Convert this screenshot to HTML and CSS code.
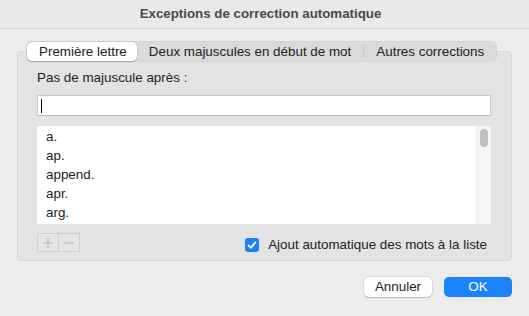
FILE: index.html
```html
<!DOCTYPE html>
<html lang="fr">
<head>
<meta charset="utf-8">
<link rel="stylesheet" href="styles.css">
</head>
<body>
<div class="window">
  <div class="titlebar">Exceptions de correction automatique</div>
  <div class="main">
    <div class="tabs">
      <div class="tab selected">Première lettre</div>
      <div class="tab">Deux majuscules en début de mot</div>
      <div class="sep"></div>
      <div class="tab">Autres corrections</div>
    </div>
    <div class="box">
      <div class="label">Pas de majuscule après :</div>
      <div class="field"><span class="caret"></span></div>
      <div class="list">
        <div class="items">
          <div class="item">a.</div>
          <div class="item">ap.</div>
          <div class="item">append.</div>
          <div class="item">apr.</div>
          <div class="item">arg.</div>
        </div>
        <div class="scrollbar"><div class="thumb"></div></div>
      </div>
      <div class="bottomrow">
        <div class="pm">
          <div class="pmbtn">
            <svg width="12" height="12" viewBox="0 0 12 12"><path d="M6 1v10M1 6h10" stroke="#b9b9b9" stroke-width="1.2" fill="none"/></svg>
          </div>
          <div class="pmbtn">
            <svg width="12" height="12" viewBox="0 0 12 12"><path d="M1 6h10" stroke="#b9b9b9" stroke-width="1.2" fill="none"/></svg>
          </div>
        </div>
        <label class="check">
          <span class="box-check">
            <svg width="14" height="14" viewBox="0 0 14 14"><path d="M3.5 7.3l2.4 2.6 4.6-5.8" stroke="#fff" stroke-width="1.8" fill="none" stroke-linecap="round" stroke-linejoin="round"/></svg>
          </span>
          <span>Ajout automatique des mots à la liste</span>
        </label>
      </div>
    </div>
    <div class="buttons">
      <div class="btn cancel">Annuler</div>
      <div class="btn ok">OK</div>
    </div>
  </div>
</div>
</body>
</html>
```
FILE: styles.css
```css
html, body {
  margin: 0;
  padding: 0;
}
body {
  width: 529px;
  height: 316px;
  background: #ececec;
  font-family: "Liberation Sans", Arial, sans-serif;
  font-size: 13.4px;
  color: #222;
  overflow: hidden;
}
.window {
  display: flex;
  flex-direction: column;
  height: 316px;
}
.titlebar {
  height: 28px;
  line-height: 28px;
  text-align: center;
  font-weight: bold;
  font-size: 13.3px;
  color: #4a4a4a;
  background: #e9e9e9;
  border-bottom: 1px solid #d2d2d2;
  padding-right: 8px;
}
.main {
  padding: 12px 17px 0 17px;
  display: flex;
  flex-direction: column;
}
.tabs {
  position: relative;
  z-index: 1;
  align-self: flex-start;
  margin-left: 9px;
  display: flex;
  align-items: center;
  height: 21px;
  padding: 0 1px;
  background: #dadada;
  border-radius: 6px;
  box-shadow: inset 0 0 0 0.5px #d0d0d0;
}
.tab {
  height: 19px;
  line-height: 19px;
  padding: 0 12px;
  white-space: nowrap;
  color: #222;
}
.tab.selected {
  background: #fff;
  border-radius: 5px;
  box-shadow: 0 0.5px 1.5px rgba(0,0,0,0.25);
  padding: 0 10px 0 12px;
}
.sep {
  width: 1px;
  height: 11px;
  background: #c6c6c6;
}
.box {
  margin-top: -11px;
  height: 210px;
  box-sizing: border-box;
  border: 1px solid #d6d6d6;
  border-radius: 5px;
  background: #e3e3e3;
  padding: 18px 20px 0 19px;
  display: flex;
  flex-direction: column;
}
.label {
  height: 16px;
  line-height: 16px;
}
.field {
  margin-top: 9px;
  height: 21px;
  box-sizing: border-box;
  background: #fff;
  border: 1px solid #c9c9c9;
  border-bottom-color: #bdbdbd;
  display: flex;
  align-items: center;
  padding-left: 3px;
}
.caret {
  width: 1px;
  height: 14px;
  background: #000;
}
.list {
  margin-top: 10px;
  height: 98px;
  background: #fff;
  display: flex;
}
.items {
  flex: 1;
  padding: 1px 0 0 9px;
}
.item {
  height: 19px;
  line-height: 19px;
}
.scrollbar {
  width: 15px;
  background: #f6f6f6;
  border-left: 1px solid #ececec;
  display: flex;
  justify-content: center;
  padding-top: 3px;
  box-sizing: border-box;
}
.thumb {
  width: 8px;
  height: 18px;
  border-radius: 4px;
  background: #c1c1c1;
}
.bottomrow {
  margin-top: 9px;
  display: flex;
  justify-content: space-between;
  align-items: flex-start;
}
.pm {
  display: flex;
  height: 19px;
  box-sizing: border-box;
  border: 1px solid #cfcfcf;
  background: #e5e5e5;
}
.pmbtn {
  width: 20px;
  display: flex;
  align-items: center;
  justify-content: center;
}
.pmbtn + .pmbtn {
  border-left: 1px solid #cfcfcf;
}
.check {
  margin-top: 4px;
  display: flex;
  align-items: center;
  gap: 9px;
  margin-right: 4px;
}
.box-check {
  width: 14px;
  height: 14px;
  border-radius: 3px;
  background: #1d7ff6;
  display: flex;
}
.buttons {
  margin-top: 16px;
  display: flex;
  justify-content: flex-end;
  gap: 12px;
}
.btn {
  width: 68px;
  height: 20px;
  line-height: 20px;
  text-align: center;
  border-radius: 5px;
}
.cancel {
  background: #fff;
  box-shadow: 0 0 0 0.5px rgba(0,0,0,0.15), 0 1px 1px rgba(0,0,0,0.15);
}
.ok {
  background: #1b82fb;
  color: #fff;
  font-weight: 500;
}
```
